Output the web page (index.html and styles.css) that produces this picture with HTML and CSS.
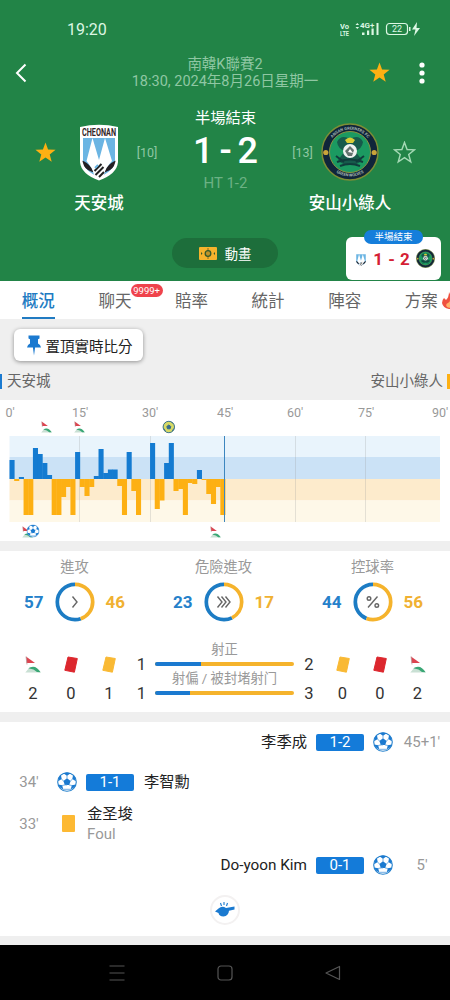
FILE: index.html
```html
<!DOCTYPE html>
<html lang="zh-Hant">
<head>
<meta charset="UTF-8" />
<meta name="viewport" content="width=device-width, initial-scale=1.0" />
<title>天安城 - 安山小綠人</title>
<link rel="stylesheet" href="styles.css">
</head>
<body>

<!-- shared icons -->
<svg class="defs" width="0" height="0">
  <symbol id="star" viewBox="0 0 24 24">
    <path d="M12 1.5l2.7 7.4 7.8.3-6.1 4.9 2.1 7.6L12 17.3l-6.5 4.4 2.1-7.6-6.1-4.9 7.8-.3z"/>
  </symbol>
  <symbol id="ball" viewBox="0 0 20 20">
    <circle cx="10" cy="10" r="9.3" fill="#fff" stroke="#2480cc" stroke-width="1.1"/>
    <path d="M10 6.300l3.600 2.600-1.400 4.200H7.800L6.400 8.900z" fill="#1b7ad0"/>
    <path d="M6.300 1.200L10 3.800l3.700-2.600Q10 0 6.300 1.200zM16.100 3l-.8 4 3.600 2.200Q18.800 5 16.100 3zM18.700 12.500l-3.900.8-1 4q3.800-1 4.900-4.800zM1.300 12.500l3.900.8 1 4q-3.800-1-4.900-4.800zM3.900 3l.8 4L1.100 9.200Q1.200 5 3.900 3z" fill="#1b7ad0"/>
    <path d="M10 6.600V3M13.300 9l2.400-2M12 12.900l2.900.6M8 12.900l-2.900.6M6.700 9L4.300 7M7.800 12.900l2.200 0M6 17.300h8" stroke="#4b98db" stroke-width=".8" fill="none"/>
  </symbol>
  <symbol id="corner" viewBox="0 0 16 17">
    <path d="M1 .5L10 7H1.600z" fill="#dc4450"/>
    <path d="M1 .5l1 8" stroke="#b9a0a0" stroke-width=".8"/>
    <path d="M.3 16.500L4.500 11.500Q11 9 15.800 16.500z" fill="#c9e0d4"/>
    <path d="M3.300 12.200Q10.500 7.800 15.600 16.300L12 16l-3.500-2.500z" fill="#3aa775"/>
  </symbol>
  <symbol id="card" viewBox="0 0 14 17">
    <path d="M4 1l9.300 1.500-2.900 13.700L.8 14.300z" stroke-width="1" stroke="currentColor" stroke-linejoin="round" fill="currentColor"/>
  </symbol>
  <symbol id="cheonan" viewBox="0 0 40 57">
    <path d="M1 3Q20-1.500 39 3V38Q38 50 20 56.500Q2 50 1 38z" fill="#fff"/>
    <path d="M4 14H36V37Q35 47 20 53Q5 47 4 37z" fill="#6bb5e3"/>
    <path d="M13.500 14L7.500 37Q12 42 16 53h8Q28 42 33 37L26 14 20 36z" fill="#fff"/>
    <path d="M4.500 38q6 3 8.500 9-7-2-8.500-9zM35.500 38q-6 3-8.500 9 7-2 8.500-9z" fill="#241f23" stroke="#241f23" stroke-width="1.500"/>
    <path d="M15.500 47l7-7M16.500 51l8-8M20 53l5-5" stroke="#222" stroke-width="2"/>
    <path d="M16 44l3-3" stroke="#6bb5e3" stroke-width="2"/>
  </symbol>
  <symbol id="ansan" viewBox="0 0 58 58">
    <circle cx="29" cy="29" r="28" fill="#10253a" stroke="#7e8d35" stroke-width="1.500"/>
    <circle cx="29" cy="29" r="20.500" fill="#1b9a61" stroke="#8b9440" stroke-width="1"/>
    <path d="M29 16q-9-5-13 3 1 7 8 9l-7 9q6 7 12 3 6 4 12-3l-7-9q7-2 8-9-4-8-13-3z" fill="#165a4b"/>
    <path d="M16 39q13-5 26 0M19 43q10-4 20 0M15 33l8 6M43 33l-8 6" stroke="#103c3c" stroke-width="2" fill="none"/>
    <path d="M24 17q5-5 10 0l-2 3h-6z" fill="#d7cc36"/>
    <circle cx="29" cy="28" r="7" fill="#eef2f0"/>
    <path d="M29 23l4 4-2 6h-4l-3-5z" fill="#63736f"/>
    <path d="M27 29l2-3 3 4z" fill="#fff"/>
    <circle cx="4.800" cy="29.500" r="2.600" fill="#c9a43a"/><circle cx="53.200" cy="29.500" r="2.600" fill="#c9a43a"/>
  </symbol>
</svg>

<header class="header">
  <div class="statusbar">
    <span class="clock">19:20</span>
    <svg width="83" height="16" viewBox="0 0 83 16" fill="#dcf7e4">
      <text x="0" y="7.500" class="tiny-text" textLength="9" lengthAdjust="spacingAndGlyphs">Vo</text>
      <text x="0" y="14.500" class="tiny-text" textLength="9" lengthAdjust="spacingAndGlyphs">LTE</text>
      <path d="M15.500 4l1.800-2 1.800 2zM15.500 6l1.800 2 1.800-2z"/>
      <text x="20" y="7" class="tiny-text">4G+</text>
      <path d="M22 11.500h2.500V14H22zM27 9.500h2.200V14H27zM31.500 7.500h2.200V14h-2.200zM36.500 2h2v12h-2z"/>
      <rect x="46.500" y="2.500" width="21" height="11" rx="3" fill="none" stroke="#dcf7e4" stroke-width="1.200"/>
      <path d="M69 6h1.500v4H69zM77 1l-5 7.500h3.500L74 15l6-8h-3.500z"/>
      <text x="57" y="11.300" text-anchor="middle" class="battery-text">22</text>
    </svg>
  </div>

  <div class="topbar">
    <svg class="back" width="12" height="20" viewBox="0 0 12 20"><path d="M10.500 1.500L2 10l8.500 8.500" fill="none" stroke="#fff" stroke-width="2"/></svg>
    <div class="league">
      <div>南韓K聯賽2</div>
      <div>18:30, 2024年8月26日星期一</div>
    </div>
    <div class="actions">
      <svg class="star" width="23" height="23"><use href="#star"/></svg>
      <svg width="6" height="22" viewBox="0 0 6 22" fill="#fff"><circle cx="3" cy="3" r="2.600"/><circle cx="3" cy="11" r="2.600"/><circle cx="3" cy="19" r="2.600"/></svg>
    </div>
  </div>

  <div class="match">
    <svg class="star" width="23" height="23"><use href="#star"/></svg>
    <svg width="40" height="57" viewBox="0 0 40 57">
      <use href="#cheonan"/>
      <text x="20" y="12" text-anchor="middle" textLength="34" lengthAdjust="spacingAndGlyphs" class="crest-text">CHEONAN</text>
    </svg>
    <span class="rank">[10]</span>
    <div class="result">
      <div class="state">半場結束</div>
      <div class="score">1 - 2</div>
      <div class="half">HT 1-2</div>
    </div>
    <span class="rank">[13]</span>
    <svg width="58" height="58" viewBox="0 0 58 58">
      <use href="#ansan"/>
      <path id="arcTop" d="M6.500 29A22.500 22.500 0 0 1 51.500 29" fill="none"/>
      <path id="arcBottom" d="M4 33A25.500 25.500 0 0 0 54 33" fill="none"/>
      <text class="ring-text"><textPath href="#arcTop" startOffset="50%" text-anchor="middle">ANSAN GREENERS FC</textPath></text>
      <text class="ring-text"><textPath href="#arcBottom" startOffset="50%" text-anchor="middle">GREEN WOLVES</textPath></text>
    </svg>
    <svg class="star-empty" width="23" height="23"><use href="#star"/></svg>
    <div class="team home">天安城</div>
    <div class="team away">安山小綠人</div>
  </div>

  <button class="animation">
    <svg width="18" height="13" viewBox="0 0 18 13"><rect width="18" height="13" rx="1" fill="#f5b32c"/><path d="M9 1v11" stroke="#7c6d25"/><path d="M2 5l1.500 1.500L2 8zM16 5l-1.500 1.500L16 8z" fill="#32592c"/><circle cx="9" cy="6.500" r="2.800" fill="#bc942a" stroke="#32592c" stroke-width="1.300"/></svg>
    動畫
  </button>

  <div class="float-score">
    <span class="float-state">半場結束</span>
    <svg width="12" height="17"><use href="#cheonan"/></svg>
    <b>1 - 2</b>
    <svg width="19" height="19"><use href="#ansan"/></svg>
  </div>
</header>

<nav class="tabs">
  <div class="tab active">概況</div>
  <div class="tab">聊天<span class="badge">9999+</span></div>
  <div class="tab">賠率</div>
  <div class="tab">統計</div>
  <div class="tab">陣容</div>
  <div class="tab">方案
    <svg class="fire" width="14" height="17" viewBox="0 0 14 17"><path d="M7 0q1 3 4 6 3 3 3 6-1 5-7 5-6-1-7-6 0-3 2-5l2 2Q7 5 7 0z" fill="#ef5140"/><path d="M8 8q3 3 2 6-2 3-5 1-2-3 1-4 2-1 2-3z" fill="#ffb46b"/></svg>
  </div>
</nav>

<section class="pin-area">
  <button class="pin">
    <svg width="14" height="21" viewBox="0 0 14 21"><path d="M1.500.5h11v3l-1.500.8v4.200q2.500 1.200 3 4H8.100L7 20.500 5.900 12.500H0q.5-2.800 3-4V4.300L1.500 3.500z" fill="#1b7ad0"/></svg>
    置頂實時比分
  </button>
  <div class="sides">
    <span class="side-home">天安城</span>
    <span class="side-away">安山小綠人</span>
  </div>
</section>

<section class="chart">
  <svg width="450" height="141" viewBox="0 0 450 141">
    <g class="axis">
      <text x="10" y="17">0'</text>
      <text x="80" y="17">15'</text>
      <text x="150" y="17">30'</text>
      <text x="225" y="17">45'</text>
      <text x="295" y="17">60'</text>
      <text x="366" y="17">75'</text>
      <text x="440" y="17">90'</text>
    </g>
    <rect x="9.500" y="36" width="430.500" height="21" fill="#e9f4fc"/>
    <rect x="9.500" y="57" width="430.500" height="22" fill="#cbe2f6"/>
    <rect x="9.500" y="79" width="430.500" height="21.500" fill="#fdebcc"/>
    <rect x="9.500" y="100.500" width="430.500" height="21.500" fill="#fef8e8"/>
    <path d="M79.500 36v86M150.500 36v86M295.500 36v86M365.500 36v86" stroke="#999" stroke-opacity=".25"/>
    <g id="bars"></g>
    <path d="M224.500 36v86" stroke="#3d86bf"/>
    <use href="#corner" x="41" y="21" width="11" height="12"/>
    <use href="#corner" x="74" y="21" width="11" height="12"/>
    <circle cx="168.800" cy="27" r="6" fill="#d7da65"/>
    <path d="M168.800 25l2 1.500-.7 2.300h-2.600l-.7-2.300zM164.500 23.500l1.500-1.500M171.500 22l1.500 1.500M163.800 28.500l1.500 2.500M173.800 28.500l-1.500 2.500" fill="#356b8e" stroke="#356b8e"/>
    <circle cx="168.800" cy="27" r="5.700" fill="none" stroke="#3c7596"/>
    <use href="#corner" x="22" y="126" width="11" height="12"/>
    <use href="#ball" x="26.500" y="124.500" width="13" height="13"/>
    <use href="#corner" x="210" y="126" width="11" height="12"/>
  </svg>
</section>

<section class="stats">
  <div class="rings">
    <div class="ring-box">
      <div class="label">進攻</div>
      <div class="ring-row">
        <b class="blue">57</b>
        <svg width="40" height="40" viewBox="0 0 40 40"><circle class="ring" cx="20" cy="20" r="17.700" pathLength="100" stroke-dasharray="0 44.700 55.300"/><circle class="ring part" cx="20" cy="20" r="17.700" pathLength="100" stroke-dasharray="44.700 100"/><path class="glyph" d="M17.500 14.500l4.500 5.500-4.500 5.500"/></svg>
        <b class="orange">46</b>
      </div>
    </div>
    <div class="ring-box">
      <div class="label">危險進攻</div>
      <div class="ring-row">
        <b class="blue">23</b>
        <svg width="40" height="40" viewBox="0 0 40 40"><circle class="ring" cx="20" cy="20" r="17.700" pathLength="100" stroke-dasharray="0 42.500 57.500"/><circle class="ring part" cx="20" cy="20" r="17.700" pathLength="100" stroke-dasharray="42.500 100"/><path class="glyph" d="M13.500 14.500l4.500 5.500-4.500 5.500M17.500 14.500l4.500 5.500-4.500 5.500M21.500 14.500l4.500 5.500-4.500 5.500"/></svg>
        <b class="orange">17</b>
      </div>
    </div>
    <div class="ring-box">
      <div class="label">控球率</div>
      <div class="ring-row">
        <b class="blue">44</b>
        <svg width="40" height="40" viewBox="0 0 40 40"><circle class="ring" cx="20" cy="20" r="17.700" pathLength="100" stroke-dasharray="0 56 44"/><circle class="ring part" cx="20" cy="20" r="17.700" pathLength="100" stroke-dasharray="56 100"/><path class="glyph" d="M24.500 14.500l-9.500 11"/><circle class="glyph" cx="16" cy="16.500" r="1.800"/><circle class="glyph" cx="23.800" cy="23.500" r="1.800"/></svg>
        <b class="orange">56</b>
      </div>
    </div>
  </div>

  <div class="totals">
    <div class="total"><svg width="16" height="17"><use href="#corner"/></svg><span>2</span></div>
    <div class="total red"><svg width="14" height="17"><use href="#card"/></svg><span>0</span></div>
    <div class="total yellow"><svg width="14" height="17"><use href="#card"/></svg><span>1</span></div>
    <div class="total"><span>1</span><span>1</span></div>
    <div class="shots">
      <div class="label">射正</div>
      <div class="bar"><div style="width: 33.300%"></div></div>
      <div class="label">射偏 / 被封堵射门</div>
      <div class="bar"><div style="width: 25%"></div></div>
    </div>
    <div class="total"><span>2</span><span>3</span></div>
    <div class="total yellow"><svg width="14" height="17"><use href="#card"/></svg><span>0</span></div>
    <div class="total red"><svg width="14" height="17"><use href="#card"/></svg><span>0</span></div>
    <div class="total"><svg width="16" height="17"><use href="#corner"/></svg><span>2</span></div>
  </div>
</section>

<section class="events">
  <div class="event right">
    <span class="player">李季成</span><span class="goal">1-2</span><svg width="20" height="20"><use href="#ball"/></svg><span class="time">45+1'</span>
  </div>
  <div class="event">
    <span class="time">34'</span><svg width="20" height="20"><use href="#ball"/></svg><span class="goal">1-1</span><span class="player">李智勳</span>
  </div>
  <div class="event tall">
    <span class="time">33'</span><span class="card"></span>
    <div><div class="player">金圣埈</div><div class="reason">Foul</div></div>
  </div>
  <div class="event right">
    <span class="player">Do-yoon Kim</span><span class="goal">0-1</span><svg width="20" height="20"><use href="#ball"/></svg><span class="time">5'</span>
  </div>
  <div class="whistle">
    <svg width="20" height="16" viewBox="0 0 20 16" fill="#1b7ad0"><path d="M0 9.500l3.500-3Q7 3.500 11 6l8.500-1.500v3L14 8.700q-.5 5.300-5.500 5.800-4.500-.3-5-3.500z"/><path d="M5.500 1l1 3M9 0v3M12.500 1l-1 3" stroke="#1b7ad0" stroke-width="1.100"/></svg>
  </div>
</section>

<footer class="navbar">
  <svg width="16" height="16" viewBox="0 0 16 16"><path d="M.5 1h15M.5 8h15M.5 15h15"/></svg>
  <svg width="16" height="16" viewBox="0 0 16 16"><rect x="1" y="1" width="14" height="14" rx="3"/></svg>
  <svg width="16" height="16" viewBox="0 0 16 16"><path d="M14.500 1.500v13L1 8z" stroke-linejoin="round"/></svg>
</footer>

<script>
// pressure per minute: above zero is home, below zero is away
const pressure = [
  19, -2, 2, -36, -36, 31, 25, 16, 4, -36, -36, -18, -8, -36, 27,
  -8, -17, -8, 3, 30, 6, 9.5, 9.5, -7, -36, 27, -12, -36, 0, 0,
  36, -30, -21.5, 16, 36, -12, -10, -36, -4, -5, 9, -1, -15, -25, -8, -36
];
const barWidth = 4.685;
const zeroY = 79;
const bars = document.getElementById('bars');

pressure.forEach((value, i) => {
  const rect = document.createElementNS('http://www.w3.org/2000/svg', 'rect');
  rect.setAttribute('x', 9.5 + i * barWidth);
  rect.setAttribute('y', value > 0 ? zeroY - value : zeroY);
  rect.setAttribute('width', barWidth + 0.4);
  rect.setAttribute('height', Math.abs(value));
  rect.setAttribute('class', value > 0 ? 'bar-home' : 'bar-away');
  bars.appendChild(rect);
});
</script>

</body>
</html>
```

FILE: styles.css
```css
* {
  box-sizing: border-box;
}
body {
  margin: 0;
  width: 450px;
  font-family: Roboto, "Noto Sans CJK TC", sans-serif;
  background: #efefef;
  color: #333;
  overflow-x: hidden;
}
svg {
  display: block;
  flex: none;
}
button {
  border: 0;
  font-family: inherit;
}
.defs {
  position: absolute;
}
.crest-text {
  font-size: 10px;
  font-weight: bold;
  fill: #33262a;
}
.ring-text {
  font-size: 4px;
  font-weight: bold;
  fill: #a9b9b5;
}
.tiny-text {
  font-size: 8px;
  font-weight: bold;
}
.battery-text {
  font-size: 9px;
}

/* header */
.header {
  position: relative;
  height: 281px;
  background: #228447;
  color: #fff;
}
.statusbar {
  height: 53px;
  padding: 5px 27px 0 67px;
  display: flex;
  align-items: center;
  justify-content: space-between;
}
.clock {
  font-size: 16px;
  color: #dcf7e4;
}
.topbar {
  height: 38px;
  padding: 1px 25px 0 15px;
  display: grid;
  grid-template-columns: 80px 1fr 70px;
  align-items: center;
}
.league {
  text-align: center;
  font-size: 14.5px;
  line-height: 17px;
  color: #8fc7a3;
}
.actions {
  display: flex;
  align-items: center;
  justify-content: flex-end;
  gap: 28px;
}
.star {
  fill: #fdb013;
}
.star-empty {
  fill: none;
  stroke: #a5d9b5;
  stroke-width: 1.5px;
}
.match {
  height: 127px;
  padding: 32px 22px 0 20px;
  display: grid;
  grid-template-columns: 50px 58px 38px 119px 35px 60px 48px;
  grid-template-rows: 58px 42px;
  align-items: center;
  justify-items: center;
}
.rank {
  font-size: 12.5px;
  color: #8fc7a3;
}
.result {
  grid-row: 1 / 3;
  grid-column: 4;
  align-self: start;
  margin-top: -15px;
  text-align: center;
}
.state {
  font-size: 15.3px;
  line-height: 20px;
}
.score {
  font-size: 36px;
  font-weight: 500;
  line-height: 46px;
  word-spacing: -3px;
}
.half {
  font-size: 15px;
  line-height: 18px;
  color: #6cb184;
}
.team {
  grid-row: 2;
  font-size: 16.5px;
  font-weight: 500;
  white-space: nowrap;
}
.home {
  grid-column: 2;
}
.away {
  grid-column: 6;
}
.animation {
  width: 106px;
  height: 30px;
  margin: 20px auto 0;
  border-radius: 15px;
  background: #1d6e3b;
  color: #fff;
  font-size: 13.3px;
  display: flex;
  align-items: center;
  justify-content: center;
  gap: 8px;
}
.float-score {
  position: absolute;
  left: 346px;
  top: 237px;
  width: 95px;
  height: 43px;
  padding: 0 6px 0 9px;
  border-radius: 6px;
  background: #fff;
  display: flex;
  align-items: center;
  justify-content: space-between;
}
.float-score b {
  color: #d51f35;
  font-size: 17px;
  word-spacing: 1px;
}
.float-state {
  position: absolute;
  left: 18px;
  top: -7px;
  width: 59px;
  border-radius: 7px;
  background: #157edb;
  font-size: 9.5px;
  line-height: 14px;
  text-align: center;
}

/* tabs */
.tabs {
  height: 38px;
  background: #fff;
  display: flex;
  overflow: hidden;
}
.tab {
  position: relative;
  flex: none;
  width: 76.6px;
  padding-top: 4px;
  text-align: center;
  font-size: 16.5px;
  line-height: 34px;
  color: #666;
}
.active {
  color: #217bc2;
  font-weight: 500;
}
.active::after {
  content: "";
  position: absolute;
  left: 22px;
  bottom: 0;
  width: 33px;
  height: 2.5px;
  background: #217bc2;
}
.badge {
  position: absolute;
  left: 54px;
  top: 3px;
  width: 32px;
  border-radius: 7px;
  background: #ef434c;
  color: #fff;
  font-size: 9.5px;
  line-height: 13px;
}
.fire {
  position: absolute;
  left: 59px;
  top: 11px;
}

/* pin and team names */
.pin-area {
  height: 81px;
  padding-top: 10px;
}
.pin {
  width: 129px;
  height: 32px;
  margin-left: 14px;
  padding: 0 0 0 2px;
  border-radius: 6px;
  background: #fff;
  box-shadow: 0 1px 4px rgba(0, 0, 0, .4);
  color: #222;
  font-size: 14.5px;
  display: flex;
  align-items: center;
  justify-content: center;
  gap: 5px;
}
.sides {
  margin-top: 13px;
  display: flex;
  justify-content: space-between;
  font-size: 14.5px;
  line-height: 15px;
  color: #666;
}
.side-home {
  border-left: 2.5px solid #1b7ad0;
  padding-left: 5px;
}
.side-away {
  border-right: 3px solid #fdb013;
  padding-right: 4px;
}

/* chart */
.chart {
  height: 141px;
  margin-bottom: 10px;
  background: #fff;
}
.axis text {
  font-size: 12.5px;
  fill: #999;
  text-anchor: middle;
}
.bar-home {
  fill: #147bd1;
}
.bar-away {
  fill: #fdb013;
}

/* stats */
.stats {
  height: 161px;
  margin-bottom: 10px;
  padding-top: 6px;
  background: #fff;
}
.label {
  color: #999;
  text-align: center;
}
.rings {
  display: grid;
  grid-template-columns: repeat(3, 149px);
}
.ring-box .label {
  font-size: 14.3px;
  line-height: 20px;
}
.ring-row {
  display: flex;
  align-items: center;
  justify-content: center;
  gap: 11px;
  margin-top: 5px;
  font-size: 17px;
}
.blue {
  color: #2581ca;
}
.orange {
  color: #f0b132;
}
.ring {
  fill: none;
  stroke: #1c7cc4;
  stroke-width: 3.7px;
  transform: rotate(-90deg);
  transform-origin: center;
}
.part {
  stroke: #f5b32c;
}
.glyph {
  fill: none;
  stroke: #666;
  stroke-width: 1.4px;
}
.totals {
  padding: 18px 0 0 14px;
  display: grid;
  grid-template-columns: 38px 38px 38px 27px 139px 30px 37px 38px 37px;
}
.total {
  padding-top: 9px;
  display: grid;
  grid-template-rows: 30px 29px;
  align-items: center;
  justify-items: center;
  font-size: 16.5px;
}
.red {
  color: #dc272e;
}
.yellow {
  color: #f9b934;
}
.total span {
  color: #333;
}
.shots {
  padding-top: 3px;
}
.shots .label {
  font-size: 13.3px;
  line-height: 14px;
  white-space: nowrap;
}
.bar {
  height: 4px;
  margin: 5px 0 6px;
  border-radius: 2px;
  overflow: hidden;
  background: #f5b32c;
}
.bar div {
  height: 100%;
  background: #1b7ad0;
}

/* events */
.events {
  height: 214px;
  margin-bottom: 9px;
  background: #fff;
}
.event {
  height: 40px;
  padding-left: 1px;
  display: flex;
  align-items: center;
}
.right {
  justify-content: flex-end;
}
.tall {
  height: 43px;
}
.time {
  width: 56px;
  text-align: center;
  font-size: 15px;
  color: #999;
}
.goal {
  width: 48px;
  margin: 0 10px 0 9px;
  border-radius: 2px;
  background: #147bd9;
  color: #fff;
  text-align: center;
  font-size: 15px;
  line-height: 17px;
}
.right .goal {
  margin-right: 9px;
}
.player {
  font-size: 15.3px;
  line-height: 20px;
  color: #222;
}
.card {
  width: 13px;
  height: 17px;
  margin: 0 12px 0 5px;
  border-radius: 1px;
  background: #fdb933;
}
.reason {
  font-size: 15px;
  line-height: 20px;
  color: #999;
}
.right .time {
  margin-left: 1px;
}
.whistle {
  width: 30px;
  height: 30px;
  margin: 10px auto 0;
  border: 2px solid #f3f1f1;
  border-radius: 50%;
  display: flex;
  align-items: center;
  justify-content: center;
}

.navbar {
  height: 55px;
  background: #000;
  display: flex;
  align-items: center;
  justify-content: center;
  gap: 92px;
}
.navbar svg {
  fill: none;
  stroke: #555;
  stroke-width: 1.2px;
}
```
